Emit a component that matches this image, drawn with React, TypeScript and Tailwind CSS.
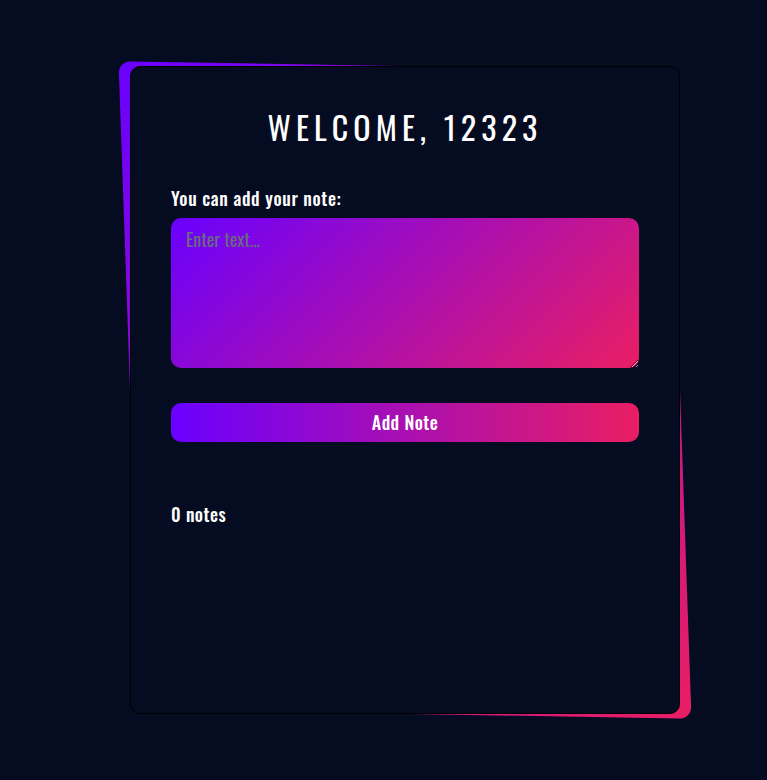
import React, { useState } from "react";

const font = "font-['Oswald','Liberation_Sans_Narrow','DejaVu_Sans_Condensed',Roboto,sans-serif]";

export default function App() {
    const [text, setText] = useState("");
    const [notes, setNotes] = useState<string[]>([]);

    const addNote = () => {
        if (!text.trim()) return;
        setNotes([...notes, text.trim()]);
        setText("");
    };

    return (
        <div className={`min-h-[780px] w-full bg-[#050b20] pt-[66px] ${font}`}>
            <div className="relative ml-[130px] w-[550px]">
                <div className="absolute inset-0 rounded-[12px] bg-[linear-gradient(135deg,#6a00ff,#e91e63)] skew-x-2 skew-y-1" />
                <div className="relative flex h-[648px] flex-col rounded-[10px] border border-black bg-[#050b20] px-10 pt-9">
                    <h1 className="text-center text-[32px] font-normal tracking-[0.16em] text-white">WELCOME, 12323</h1>
                    <label className="mt-[34px] text-[18px] font-medium tracking-[0.035em] text-white">You can add your note:</label>
                    <textarea
                        value={text}
                        onChange={(e) => setText(e.target.value)}
                        placeholder="Enter text..."
                        className="mt-1.5 h-[150px] w-full rounded-[10px] bg-[linear-gradient(135deg,#6a00ff,#e91e63)] px-[15px] py-2 text-[18px] text-white outline-none placeholder:text-[#6b6b80]"
                    />
                    <button
                        onClick={addNote}
                        className="mt-[35px] h-[39px] w-full rounded-[10px] bg-[linear-gradient(to_right,#6a00ff,#e91e63)] text-[18px] font-medium tracking-wide text-white"
                    >
                        Add Note
                    </button>
                    <p className="mt-[59px] text-[18px] font-medium tracking-wide text-white">
                        {notes.length} notes
                    </p>
                </div>
            </div>
        </div>
    );
}
